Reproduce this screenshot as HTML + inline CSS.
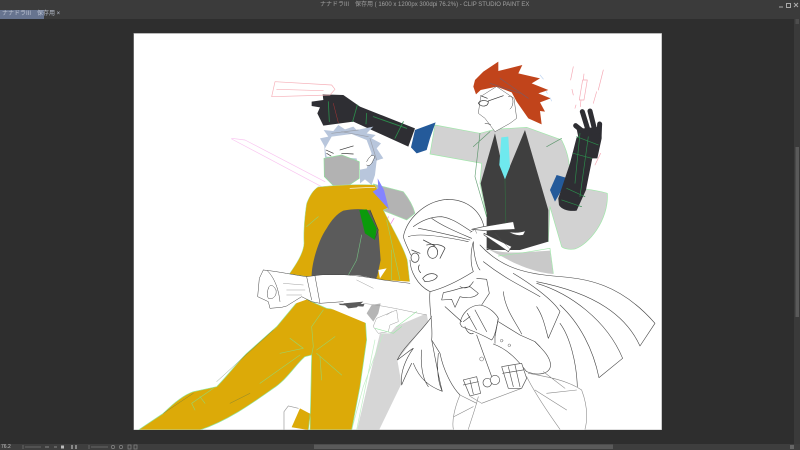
<!DOCTYPE html>
<html><head><meta charset="utf-8"><style>
html,body{margin:0;padding:0;width:800px;height:450px;overflow:hidden;background:#2e2e2e}
div{position:absolute}
.t{font:6px/9px "Liberation Sans","Noto Sans CJK JP",sans-serif;color:#a0a0a0;white-space:pre}
</style></head><body>
<div style="left:0;top:0;width:800px;height:19px;background:#3b3b3b"></div>
<div class="t" style="left:320px;top:1px;width:160px;text-align:center">ナナドラIII　保存用 ( 1600 x 1200px 300dpi 76.2%) - CLIP STUDIO PAINT EX</div>
<div class="t" style="left:0;top:10px;width:44px;height:9px;background:#67748f;color:#bcc3d2;padding-left:2px;box-sizing:border-box">ナナドラIII　保存用 ×</div>
<svg width="800" height="450" viewBox="0 0 800 450" style="position:absolute;left:0;top:0">
<rect x="133.5" y="33" width="528.5" height="397" fill="#999"/>
<rect x="134" y="33.7" width="527.5" height="396" fill="#fff"/>
<defs><clipPath id="c"><rect x="134" y="33.7" width="527.5" height="396"/></clipPath></defs>
<g clip-path="url(#c)" stroke-linejoin="round" stroke-linecap="round" style="filter:blur(.3px)">

<!-- Red-haired man, zoom-5 space -->
<g transform="translate(260,50) scale(.3333)">
<path d="M525 225 L660 250 L705 238 L800 232 L905 270 C925 310 935 350 925 410 C960 415 1010 420 1042 430 C1045 470 1030 510 1010 540 C990 570 965 590 945 597 C925 600 910 595 905 590 L870 470 L865 575 L680 500 L660 400 L665 340 L510 312 Z" fill="#d2d2d2" stroke="#9fe8a9" stroke-width="2"/>
<path d="M705 250 L735 385 L795 240 L865 480 L865 575 L780 600 L680 600 L680 490 L662 400 Z" fill="#3f3f3f"/>
<path d="M724 262 L745 260 L750 350 L735 388 L718 345 Z" fill="#6fe9ee"/>
<path d="M735 388 L738 540 M660 250 L645 380 L680 500 M860 290 L905 265 M640 290 L690 245" fill="none" stroke="#2f7f45" stroke-width="2" opacity=".7"/>
<path d="M890 375 L925 385 L885 455 L870 420 Z" fill="#245a9a"/>
<!-- pointing arm -->
<path d="M155 155 L190 150 L188 133 L250 135 L300 170 L465 235 L445 290 L280 215 L190 227 L172 190 L180 172 L155 168 Z" fill="#2e2e33"/>
<path d="M292 165 L278 215 M320 190 L318 222 M340 200 L440 235 M430 215 L405 265 M205 155 L208 215" fill="none" stroke="#2c8c4c" stroke-width="2.5"/>
<path d="M220 160 L235 218" stroke="#a33" stroke-width="1.5" fill="none"/>
<path d="M465 240 L527 217 L510 265 L500 300 L470 310 L453 292 Z" fill="#245a9a"/>
<!-- pink sketch -->
<path d="M45 95 L215 105 L225 118 L210 135 L35 140 Z M50 118 L190 122" fill="none" stroke="#f6b0b8" stroke-width="2"/>
<path d="M968 90 L982 90 L972 150 L958 150 Z M972 72 L970 88 M963 150 L961 170 M940 50 L932 90 M936 118 L940 135 M948 165 L945 175 M1030 60 L1015 120 M1010 125 L1000 160 M1022 310 L1005 345" fill="none" stroke="#f5a8b4" stroke-width="2"/>
</g>

<g transform="translate(460,55) scale(.3333)">
<path d="M62 125 L55 175 L75 190 L105 230 L150 205 L170 190 L162 130 L110 95 Z" fill="#fff" stroke="#555" stroke-width="1.5"/>
<path d="M45 75 L70 50 L115 20 L115 48 L187 30 L175 55 L240 70 L215 85 L265 105 L235 115 L272 130 L240 142 L255 170 L240 168 L245 208 L205 190 L170 140 L155 112 L110 95 L62 105 L48 118 L40 95 Z" fill="#c1441b"/>
<path d="M120 70 L205 130 M90 85 L180 115" stroke="#7f5a60" stroke-width="2" fill="none"/>
<path d="M240 60 L250 72 M270 128 L275 138 M258 108 L262 115" stroke="#c0d6f2" stroke-width="2" fill="none"/>
<path d="M55 145 C60 135 75 135 85 140 C85 155 65 158 55 145 Z M85 138 L130 122 M62 122 L82 130" fill="none" stroke="#333" stroke-width="2"/>
<path d="M75 205 L92 208 M145 125 C160 115 165 150 150 162" fill="none" stroke="#333" stroke-width="1.5"/>
<!-- hand fingers -->
<g stroke="#2e2e33" stroke-width="15" fill="none">
<path d="M372 232 L347 212 M385 228 L367 170 M405 228 L390 168 M417 242 L419 207"/>
</g>
<path d="M350 222 L425 215 L425 250 L412 310 L368 310 Z" fill="#2e2e33"/>
</g>
<g transform="translate(260,50) scale(.3333)">
<path d="M950 262 L1020 250 L1000 310 L978 420 L950 482 C930 485 905 480 897 465 L895 445 L930 340 Z" fill="#2e2e33"/>
<path d="M920 415 L975 440 M905 450 L965 470 M950 260 L1015 285 M940 310 L995 325 M960 250 L945 400 M985 260 L960 440" fill="none" stroke="#2c8c4c" stroke-width="2"/>
</g>

<!-- silver man, zoom-8 space -->
<g transform="translate(225,70) scale(.3333)">
<path d="M300 262 L298 228 L285 205 L310 200 L296 180 L325 183 L340 165 L360 178 L385 170 L395 180 L445 170 L425 190 L452 195 L440 205 L468 220 L455 235 L475 265 L455 272 L450 315 L440 345 L420 328 L405 340 L405 300 Z" fill="#b8c6dc"/>
<path d="M305 260 L300 235 L320 200 L380 192 L425 210 L440 250 L425 295 L400 300 L395 265 Z" fill="#fff"/>
<path d="M350 185 L430 200 M320 190 L400 180 M435 205 L455 270" stroke="#9a9fa8" stroke-width="2" fill="none"/>
<path d="M303 240 L325 250 M345 240 L385 228 M350 250 L385 252 M305 250 L318 258" stroke="#333" stroke-width="2" fill="none"/>
<path d="M425 275 C440 245 455 255 445 270 C440 285 430 290 425 285" fill="#fff" stroke="#333" stroke-width="1.5"/>
<path d="M297 265 L350 255 L403 275 L403 325 L370 347 L325 347 L298 320 Z" fill="#b2b2b2" stroke="#8fe09b" stroke-width="2"/>
<path d="M20 205 L60 210 L300 335 M20 207 L290 350" stroke="#f9c4f0" stroke-width="2" fill="none"/>
</g>

<!-- gray sleeve + pink tab -->
<g transform="translate(260,50) scale(.3333)">
<path d="M340 402 L430 425 C450 450 460 470 465 490 L440 510 L365 480 Z" fill="#b3b3b3" stroke="#a0e8aa" stroke-width="2"/>
<path d="M385 500 L378 525 L390 525 L402 505" fill="none" stroke="#f080e0" stroke-width="2"/>
</g>

<!-- yellow man, zoom-6 space -->
<g transform="translate(130,200) scale(.3333)">
<path d="M750 400 L890 340 L898 385 L815 550 L745 695 L680 695 Z" fill="#d6d6d6"/>
<path d="M700 350 L760 400 L700 560 L665 690 M735 420 L680 690" fill="none" stroke="#bfeec5" stroke-width="2"/>
<!-- jacket as one shape -->
<path d="M564 -39 C620 -45 690 -48 735 -45 L774 24 L760 30 C790 90 820 140 832 180 L840 250 L545 232 L478 222 C500 190 520 160 522 130 C520 90 525 40 530 10 C540 -15 550 -30 564 -39 Z" fill="#dcaa08" stroke="#a5eaae" stroke-width="1.5"/>
<path d="M640 32 C670 26 700 26 722 32 L745 90 L752 180 L742 228 L700 320 L630 315 L545 228 C545 190 565 120 590 85 C605 60 620 42 640 32 Z" fill="#5b5b5b"/>
<path d="M688 30 L710 28 L740 85 L735 120 L705 100 Z" fill="#0b9a0b"/>
<path d="M720 30 L745 90 L735 115" fill="none" stroke="#3b4b3b" stroke-width="2"/>
<path d="M695 105 L680 180 L655 225 M565 50 L530 80 M785 150 L785 240 M770 60 L810 240" fill="none" stroke="#7ddf90" stroke-width="2" opacity=".7"/>
<path d="M745 210 L770 205 L750 235 Z" fill="#fff"/>
<path d="M515 290 L545 305 L590 325 L705 340 L710 420 L690 560 L665 690 L540 690 L545 465 L525 470 C500 490 470 540 430 565 C380 600 300 660 210 690 L25 690 L100 640 C130 610 160 585 190 575 L260 560 C290 530 320 490 350 460 L440 380 Z" fill="#dcaa08" stroke="#93e89f" stroke-width="2"/>
<path d="M510 625 L542 642 L535 690 L485 682 Z" fill="#dcaa08"/>
<path d="M505 625 L475 618 L462 635 L462 690" fill="none" stroke="#999" stroke-width="2"/>
<path d="M580 330 L545 380 L550 440 L545 465 M450 460 L520 445 L480 415 M560 450 L615 410 M560 460 L635 525 M570 470 L575 540 M540 640 L535 690 M250 565 L185 610 L195 630 M210 590 L225 610 M390 550 L510 465" fill="none" stroke="#8fdc7a" stroke-width="2" opacity=".8"/>
<path d="M260 545 L430 390 M100 640 L190 580 M300 610 L360 580" fill="none" stroke="#4b6b4b" stroke-width="1.5" opacity=".6"/>
<path d="M400 210 L530 230 L570 225 L680 225 L760 240 L840 245 L880 275 L900 345 L800 325 L700 312 L570 310 L540 295 L470 320 L420 325 L385 290 L390 235 Z" fill="#fff"/>
<path d="M570 312 C600 325 650 330 700 320 L712 345 L760 330 L800 330 L810 365 L780 400 L745 400 L730 380 L710 370 Z" fill="#fff"/>
<path d="M640 310 L700 305 L680 322 L655 325 Z" fill="#5b5b5b"/>
<path d="M710 340 L725 315 L752 310 L745 340 L730 365 Z" fill="#b5b5b5"/>
<g fill="none" stroke="#444" stroke-width="1.5">
<path d="M530 230 L570 225 C620 220 680 225 760 240 L840 250 M400 210 L388 235 L383 290 L415 305 L420 325 L455 322 L470 318 L515 290 L545 305 L570 310 L640 305 M400 210 C450 215 490 225 530 230 M530 230 L545 300 M555 228 L570 310"/>
<path d="M415 265 C420 250 430 255 438 270 C442 290 425 300 415 295 C410 285 412 275 415 265 M412 212 C430 230 445 260 450 305"/>
</g>
<path d="M460 250 L520 255 M470 270 L525 270 M470 285 L515 285 M680 240 L730 265 M700 310 C780 320 840 335 890 345 M740 355 L800 330 L805 365 L780 375 L775 395 L745 400 L730 380 Z M770 345 L785 335" fill="none" stroke="#999" stroke-width="1.4"/>
<path d="M735 385 L790 400 L815 380 M800 380 L860 335" fill="none" stroke="#9fe8a9" stroke-width="2"/>
</g>
<g transform="translate(260,50) scale(.3333)">
<path d="M353 385 L372 420 L387 478 L338 425 L355 415 Z" fill="#8484ff"/>
<path d="M270 415 L345 412" stroke="#fff" stroke-width="2" fill="none"/>
</g>

<!-- girl, zoom-7 space -->
<g transform="translate(380,190) scale(.3333)">
<path d="M310 170 C360 195 420 188 510 182 L520 252 C480 250 430 232 395 215 Z" fill="#c9c9c9"/>
<path d="M355 198 L430 188 L510 175 L520 250" fill="none" stroke="#a0e8aa" stroke-width="2"/>
<path d="M70 140 C80 90 130 35 200 28 C260 28 300 60 312 110 L300 165 C360 230 430 250 520 258 C620 265 720 280 825 400 L780 468 L728 505 L657 563 L592 590 L625 660 L615 720 L220 720 L240 615 L187 604 C150 590 120 570 100 520 L65 585 L52 510 L155 380 L140 300 L90 220 Z" fill="#fff"/>
<g fill="none" stroke="#444" stroke-width="1.8">
<path d="M70 140 C80 90 130 35 200 28 C260 28 300 60 312 110 M70 140 C75 160 85 175 92 195"/>
<path d="M100 110 C120 95 150 80 185 80 C220 85 250 110 275 125 M155 85 C190 110 240 130 275 145 M115 115 C170 125 230 140 270 150 M85 140 C110 130 170 135 265 155"/>
<path d="M90 210 C90 240 110 285 150 305 C190 295 240 270 280 245 C272 225 270 190 280 155 M280 155 C280 190 290 230 300 240"/>
<path d="M300 165 C360 230 430 250 520 258 C620 265 720 280 825 400 L780 468 C740 380 650 310 470 275"/>
<path d="M310 215 C380 270 430 290 480 320 M470 280 C570 310 680 390 728 505 L657 563 C640 480 600 400 540 345"/>
<path d="M540 400 C570 440 590 520 592 590"/>
<path d="M150 305 C145 350 160 400 155 450 C165 500 175 560 187 604 C150 590 120 570 100 520 M155 380 C120 430 70 470 52 510 C80 490 90 480 100 475 C75 510 60 550 65 585 C75 560 85 540 95 520 M125 480 C120 530 130 570 145 590 M175 490 C170 540 175 580 187 604"/>
<path d="M155 450 L180 490 C190 540 215 590 240 615"/>
<path d="M240 290 C260 300 270 290 280 275 M240 295 C225 300 205 305 190 308 L185 330 L215 328 L225 352 L240 320 C255 325 285 325 295 310 L270 290 L240 295 M195 350 L245 395 M290 265 L320 268 L328 310 L305 345"/>
<path d="M240 400 C245 370 270 345 300 345 C330 350 350 375 355 385 C350 410 345 440 335 450 C300 430 270 420 245 410 Z M262 370 L290 420 M285 360 L320 425 M250 395 L270 380 M255 410 C260 425 270 435 280 430"/>
<path d="M355 385 L345 440 L345 460 M340 462 C390 480 420 520 440 545 C480 560 510 550 512 525 C510 500 490 480 465 455 L420 435 L355 395"/>
<path d="M400 250 C450 280 520 330 540 365 L505 445 M370 305 C375 360 410 400 425 432 M505 445 C495 410 490 380 470 350 M465 455 L480 470"/>
<path d="M290 435 L335 560"/>
</g>
<path d="M312 130 L395 170 L385 185 L312 135 Z M275 118 L310 110 L400 95 L405 118 L320 122 Z M385 125 C400 128 420 128 437 122 L430 135 C410 140 395 132 385 125 Z" fill="#fff" stroke="#444" stroke-width="1.8"/>
<path d="M345 130 L390 178 M270 128 L285 118 L290 130" fill="none" stroke="#555" stroke-width="1.2"/>
<g fill="none" stroke="#444" stroke-width="2.2">
<ellipse cx="158" cy="187" rx="15" ry="18"/><ellipse cx="105" cy="203" rx="12" ry="14"/>
<path d="M130 150 L165 168 M95 180 L120 190 M140 165 C165 160 190 165 195 175 L180 205 M118 225 C112 235 118 245 122 248"/>
<path d="M128 265 C145 245 165 250 172 258 C170 270 150 275 135 275 Z"/>
</g>
<circle cx="305" cy="507" r="6" fill="none" stroke="#666" stroke-width="1.5"/>
<circle cx="365" cy="452" r="4" fill="none" stroke="#666" stroke-width="1.5"/>
<circle cx="388" cy="466" r="4" fill="none" stroke="#666" stroke-width="1.5"/>
<g fill="#fff" stroke="#555" stroke-width="2">
<path d="M250 570 L290 560 L302 610 L270 618 Z"/><circle cx="322" cy="578" r="13"/><circle cx="345" cy="570" r="14"/>
<path d="M365 530 L425 520 L440 565 L425 595 L385 595 Z"/>
<path d="M270 570 L280 612 M385 530 L400 590 M405 525 L420 590 M250 585 L295 575 M368 550 L430 540" fill="none"/>
</g>
<g fill="none" stroke="#888" stroke-width="1.7">
<path d="M445 550 C500 560 560 570 605 600 C620 640 625 680 615 718 M440 560 C470 620 520 690 540 718 M500 610 L590 600 M490 545 L555 595 M465 600 L560 660"/>
<path d="M240 615 C225 650 215 690 220 718 M295 620 C285 660 270 700 265 718 M272 620 L305 640 L425 595 M222 680 L280 650 M240 615 L290 640"/>
</g>
</g>
</g>

<!-- window controls -->
<path d="M779 7 H783" stroke="#aaa" stroke-width="1"/>
<rect x="786.5" y="3.5" width="4" height="4" fill="none" stroke="#aaa"/>
<path d="M794 3 L798 7 M798 3 L794 7" stroke="#aaa"/>
<!-- scrollbars -->
<rect x="794" y="19" width="6" height="425" fill="#3a3a3a"/>
<rect x="795.5" y="147" width="3.5" height="170" fill="#5a5a5a"/>
<rect x="795.5" y="19" width="3.5" height="5" fill="#4d4d4d"/>
<rect x="0" y="444" width="800" height="6" fill="#3e3e3e"/>
<rect x="314" y="444.5" width="299" height="4.5" fill="#5a5a5a"/>
<path d="M23 445 V449 M25 447 H41 M89 445 V449 M91 447 H108" stroke="#666" stroke-width="1"/>
<rect x="61" y="445.5" width="3" height="3" fill="#bbb"/>
<path d="M45 447 H49 M54 447 H57" stroke="#888"/>
<rect x="71" y="445" width="2" height="4" fill="#888"/>
<rect x="75" y="445" width="2" height="4" fill="#888"/>
<circle cx="113" cy="447" r="1.6" fill="none" stroke="#888" stroke-width=".7"/>
<circle cx="121" cy="447" r="1.6" fill="none" stroke="#888" stroke-width=".7"/>
<rect x="128" y="445" width="3" height="4" fill="none" stroke="#888" stroke-width=".7"/>
<rect x="134" y="445" width="3" height="4" fill="none" stroke="#888" stroke-width=".7"/>
<rect x="790" y="445" width="4" height="4" fill="#666"/>
</svg>
<div class="t" style="left:1px;top:444px;font-size:5px;line-height:6px;color:#c0c0c0">76.2</div>
</body></html>
